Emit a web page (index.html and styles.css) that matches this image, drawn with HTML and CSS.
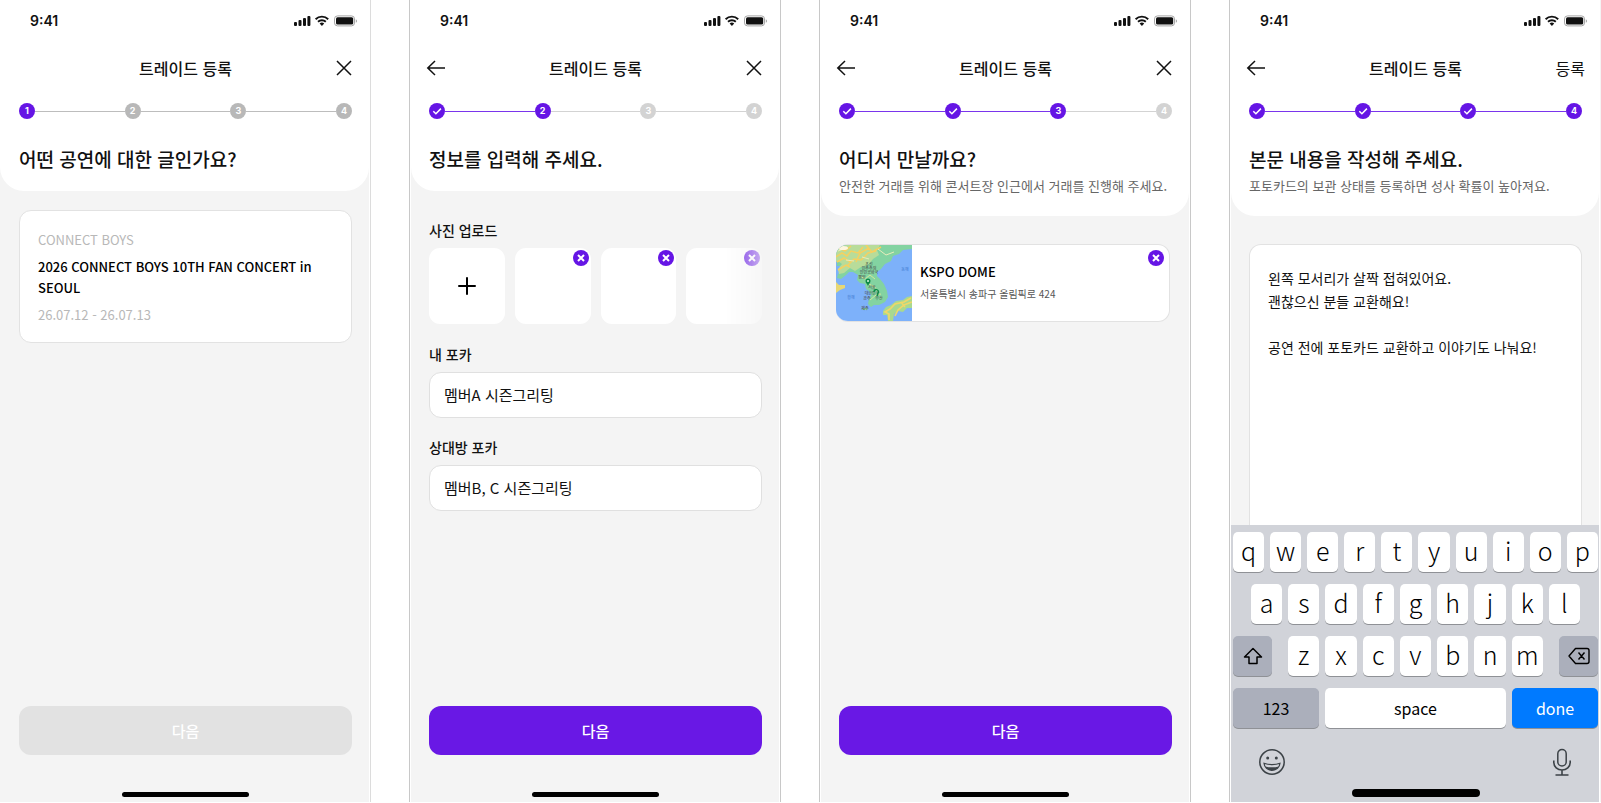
FILE: index.html
```html
<!DOCTYPE html>
<html lang="ko">
<head>
<meta charset="utf-8">
<meta name="viewport" content="width=device-width, initial-scale=1">
<title>트레이드 등록</title>
<link rel="stylesheet" href="styles.css">
</head>
<body>
<svg class="defs" aria-hidden="true">
  <symbol id="i-status" viewBox="0 0 64 12">
    <rect x="0" y="7" width="3" height="4" rx="1"/>
    <rect x="4.500" y="5" width="3" height="6" rx="1"/>
    <rect x="9" y="3" width="3" height="8" rx="1"/>
    <rect x="13.400" y="1" width="3" height="10" rx="1"/>
    <path d="M21.600 4.200a9 9 0 0 1 12.600 0M24 6.800a5.600 5.600 0 0 1 7.800 0" fill="none" stroke="currentColor" stroke-width="1.900"/>
    <path d="M27.900 11l-2.300-2.400a3.300 3.300 0 0 1 4.600 0z"/>
    <rect x="40.500" y="0.900" width="20" height="10" rx="3" fill="none" stroke="#a5a5a5" stroke-width="1"/>
    <rect x="42" y="2.300" width="17.200" height="7.200" rx="1.500"/>
    <path d="M61.800 4.200v3.500c.8-.3 1.200-1 1.200-1.750s-.4-1.400-1.200-1.750z" fill="#a5a5a5"/>
  </symbol>
  <symbol id="i-back" viewBox="0 0 20 20">
    <path d="M9 3L1.800 10 9 17M2 10h17" fill="none" stroke="currentColor" stroke-width="1.500"/>
  </symbol>
  <symbol id="i-close" viewBox="0 0 20 20">
    <path d="M3 3l14 14M17 3L3 17" fill="none" stroke="currentColor" stroke-width="1.500"/>
  </symbol>
  <symbol id="i-check" viewBox="0 0 16 16">
    <path d="M4.300 8.200l2.600 2.500 5-5.100" fill="none" stroke="currentColor" stroke-width="1.500"/>
  </symbol>
  <symbol id="i-remove" viewBox="0 0 16 16">
    <path d="M5 5l6 6M11 5l-6 6" fill="none" stroke="currentColor" stroke-width="2"/>
  </symbol>
</svg>

<main class="board">
  <section class="screen screen-first">
    <header class="top">
      <div class="status"><span>9:41</span><svg class="status-icons" aria-hidden="true"><use href="#i-status"/></svg></div>
      <nav class="nav">
        <span></span>
        <h1>트레이드 등록</h1>
        <button class="icon-btn" aria-label="닫기"><svg><use href="#i-close"/></svg></button>
      </nav>
      <ol class="steps steps-dark">
        <li class="on"><span>1</span></li>
        <li><span>2</span></li>
        <li><span>3</span></li>
        <li><span>4</span></li>
      </ol>
      <h2>어떤 공연에 대한 글인가요?</h2>
    </header>
    <div class="content">
      <article class="concert">
        <p class="muted">CONNECT BOYS</p>
        <h3>2026 CONNECT BOYS 10TH FAN CONCERT in SEOUL</h3>
        <p class="muted">26.07.12 - 26.07.13</p>
      </article>
    </div>
    <footer class="bottom">
      <button class="next" disabled>다음</button>
      <div class="home"></div>
    </footer>
  </section>

  <section class="screen">
    <header class="top">
      <div class="status"><span>9:41</span><svg class="status-icons" aria-hidden="true"><use href="#i-status"/></svg></div>
      <nav class="nav">
        <button class="icon-btn" aria-label="뒤로"><svg><use href="#i-back"/></svg></button>
        <h1>트레이드 등록</h1>
        <button class="icon-btn" aria-label="닫기"><svg><use href="#i-close"/></svg></button>
      </nav>
      <ol class="steps">
        <li class="on done"><span><svg><use href="#i-check"/></svg></span></li>
        <li class="on"><span>2</span></li>
        <li><span>3</span></li>
        <li><span>4</span></li>
      </ol>
      <h2>정보를 입력해 주세요.</h2>
    </header>
    <form class="content form">
      <h3 class="label">사진 업로드</h3>
      <div class="photos">
        <button type="button" class="photo" aria-label="사진 추가"><svg class="plus" viewBox="0 0 18 18"><path d="M9 1v16M1 9h16" stroke="currentColor" stroke-width="2" stroke-linecap="round"/></svg></button>
        <div class="photo"><button type="button" class="remove" aria-label="사진 삭제"><svg><use href="#i-remove"/></svg></button></div>
        <div class="photo"><button type="button" class="remove" aria-label="사진 삭제"><svg><use href="#i-remove"/></svg></button></div>
        <div class="photo"><button type="button" class="remove" aria-label="사진 삭제"><svg><use href="#i-remove"/></svg></button></div>
      </div>
      <label class="label" for="mine">내 포카</label>
      <input class="field" id="mine" type="text" value="멤버A 시즌그리팅">
      <label class="label" for="theirs">상대방 포카</label>
      <input class="field" id="theirs" type="text" value="멤버B, C 시즌그리팅">
    </form>
    <footer class="bottom">
      <button class="next">다음</button>
      <div class="home"></div>
    </footer>
  </section>

  <section class="screen">
    <header class="top">
      <div class="status"><span>9:41</span><svg class="status-icons" aria-hidden="true"><use href="#i-status"/></svg></div>
      <nav class="nav">
        <button class="icon-btn" aria-label="뒤로"><svg><use href="#i-back"/></svg></button>
        <h1>트레이드 등록</h1>
        <button class="icon-btn" aria-label="닫기"><svg><use href="#i-close"/></svg></button>
      </nav>
      <ol class="steps">
        <li class="on done"><span><svg><use href="#i-check"/></svg></span></li>
        <li class="on done"><span><svg><use href="#i-check"/></svg></span></li>
        <li class="on"><span>3</span></li>
        <li><span>4</span></li>
      </ol>
      <h2>어디서 만날까요?</h2>
      <p class="hint">안전한 거래를 위해 콘서트장 인근에서 거래를 진행해 주세요.</p>
    </header>
    <div class="content place-area">
      <article class="place">
        <svg class="map" viewBox="0 0 76 76" role="img" aria-label="지도">
          <rect width="76" height="76" fill="#7db1fa"/>
          <path d="M0 0h76v4l-9 1-4 4-6 2-2 5-6 3-4 5-4 3 0 4 3 3 4 5 3 7 1 6-3 5-6 3-5 0-3 2-3-3 1-5 2-4-2-4-3-2-1-5-5-1-3-3 1-5-5-3-4 0-3 3-5 4-4-1 1-4 4-4-1-4-4 0z" fill="#83d3a1"/>
          <path d="M0 0h44l-3 5 2 5-6 4-5 6-7 2-6 4-5-3-6 5-5 1-1-5 4-5-4-3-2 1z" fill="#b8dc9a"/>
          <path d="M0 12l6-4 5 3 4-5 7 2 5-6M12 20l6-6 7 1 7-7 8-2M3 3l6 3 6-5M20 17l4-9 9-5M30 0l6 7 9-5M1 17l7-4 6 4M2 25l8-5 4 2" fill="none" stroke="#f5d060" stroke-width="1.500"/>
          <path d="M2 6l8-3M26 12l7 2M10 15l8 1M42 4l8 6 8-3" fill="none" stroke="#e8ecbb" stroke-width="1"/>
          <ellipse cx="7" cy="3" rx="5" ry="2" fill="#fdf6df"/>
          <path d="M24 31l5 3 5-4 5 4M33 39l6 3 4 7M34 55l6-5 5-1" fill="none" stroke="#d5e79a" stroke-width="1"/>
          <path d="M0 37l3 3 6 0 0 3-5 2-4 3z" fill="#e7d774"/>
          <path d="M76 51l-5 1-4 3-7 1-5 4-5 2-3 4 0 4 4 0 1 6h5l1-7 4-3 5 1 4-4h5z" fill="#a9d98f"/>
          <path d="M75 53l-7 4-9 2-5 5-5 3 4 2 0 6M76 57l-8 3-6 5-3 6M65 57l4 5" fill="none" stroke="#f0d768" stroke-width="1.600"/>
          <ellipse cx="29" cy="64" rx="3" ry="1" fill="#83d3a1"/>
          <g class="map-text">
            <text x="33" y="21">조선</text>
            <text x="33" y="25">민주주의</text>
            <text x="33" y="29">인민공화국</text>
            <text x="26" y="34">평양</text>
            <text x="36" y="44">서울</text>
            <text x="36" y="50">대한민국</text>
            <text x="31" y="55">광주</text>
            <text x="43" y="55">부산</text>
            <text x="29" y="65">제주</text>
            <text class="sea" x="69" y="26">동해</text>
            <text class="sea" x="15" y="54">황해</text>
          </g>
          <path d="M32 41c-.500-2-2.500-2.800-2.500-5a2.500 2.500 0 0 1 5 0c0 2.200-2 3-2.500 5z" fill="#0d8a4a"/>
          <circle cx="32" cy="36" r="1" fill="#d8f3df"/>
          <path d="M38 47a2.200 2.200 0 1 1 4 1l-1 3" fill="none" stroke="#0d8a4a" stroke-width="1.500"/>
        </svg>
        <div class="place-text">
          <h3>KSPO DOME</h3>
          <p>서울특별시 송파구 올림픽로 424</p>
        </div>
        <button class="remove" aria-label="장소 삭제"><svg><use href="#i-remove"/></svg></button>
      </article>
    </div>
    <footer class="bottom">
      <button class="next">다음</button>
      <div class="home"></div>
    </footer>
  </section>

  <section class="screen screen-last">
    <header class="top">
      <div class="status"><span>9:41</span><svg class="status-icons" aria-hidden="true"><use href="#i-status"/></svg></div>
      <nav class="nav">
        <button class="icon-btn" aria-label="뒤로"><svg><use href="#i-back"/></svg></button>
        <h1>트레이드 등록</h1>
        <button class="submit">등록</button>
      </nav>
      <ol class="steps">
        <li class="on done"><span><svg><use href="#i-check"/></svg></span></li>
        <li class="on done"><span><svg><use href="#i-check"/></svg></span></li>
        <li class="on done"><span><svg><use href="#i-check"/></svg></span></li>
        <li class="on"><span>4</span></li>
      </ol>
      <h2>본문 내용을 작성해 주세요.</h2>
      <p class="hint">포토카드의 보관 상태를 등록하면 성사 확률이 높아져요.</p>
    </header>
    <div class="content write">
      <textarea class="body-text" aria-label="본문">왼쪽 모서리가 살짝 접혀있어요.
괜찮으신 분들 교환해요!

공연 전에 포토카드 교환하고 이야기도 나눠요!</textarea>
    </div>
    <div class="keyboard">
      <div class="keys">
        <button>q</button><button>w</button><button>e</button><button>r</button><button>t</button><button>y</button><button>u</button><button>i</button><button>o</button><button>p</button>
      </div>
      <div class="keys keys-mid">
        <button>a</button><button>s</button><button>d</button><button>f</button><button>g</button><button>h</button><button>j</button><button>k</button><button>l</button>
      </div>
      <div class="keys-low">
        <button class="gray" aria-label="shift"><svg class="key-icon" viewBox="0 0 24 24"><path d="M12 4.500l8.500 8.500h-4.500v6.500h-8v-6.500h-4.500z" fill="none" stroke="currentColor" stroke-width="1.500" stroke-linejoin="round"/></svg></button>
        <div class="keys">
          <button>z</button><button>x</button><button>c</button><button>v</button><button>b</button><button>n</button><button>m</button>
        </div>
        <button class="gray" aria-label="delete"><svg class="key-icon" viewBox="0 0 24 24"><path d="M8.500 4.500h11.500a2 2 0 0 1 2 2v11a2 2 0 0 1-2 2h-11.500l-6.500-7.500zM11.500 8.500l6 7M17.500 8.500l-6 7" fill="none" stroke="currentColor" stroke-width="1.400" stroke-linejoin="round"/></svg></button>
      </div>
      <div class="keys-space">
        <button class="gray">123</button>
        <button>space</button>
        <button class="blue">done</button>
      </div>
      <div class="tools">
        <button aria-label="emoji"><svg viewBox="0 0 28 28"><circle cx="14" cy="14" r="12.200" fill="none" stroke="currentColor" stroke-width="1.500"/><circle cx="9.700" cy="10" r="1.500"/><circle cx="18.300" cy="10" r="1.500"/><path d="M6 15.300c2.500 1 5 1.400 8 1.400s5.500-.4 8-1.400c-.3 4-3.600 7-8 7s-7.700-3-8-7z" fill="none" stroke="currentColor" stroke-width="1.200"/><path d="M7.200 18.400c4 1.300 9.600 1.300 13.600 0-1.200 2.400-3.600 3.900-6.800 3.900s-5.600-1.500-6.800-3.900z"/></svg></button>
        <button aria-label="dictation"><svg viewBox="0 0 28 28"><rect x="9.800" y="1.500" width="8.400" height="16.500" rx="4.200" fill="none" stroke="currentColor" stroke-width="1.500"/><path d="M5.800 12.500v2a8.200 7.500 0 0 0 16.400 0v-2M14 22v4.500M7.500 27h13" fill="none" stroke="currentColor" stroke-width="1.600"/></svg></button>
      </div>
      <div class="home home-thick"></div>
    </div>
  </section>
</main>
</body>
</html>
```
FILE: styles.css
```css
* { box-sizing: border-box; }

body {
  margin: 0;
  background: #fff;
  color: #111;
  font-family: "Noto Sans CJK KR", "Noto Sans", sans-serif;
}

h1, h2, h3, p, ol { margin: 0; padding: 0; }

button {
  margin: 0;
  padding: 0;
  border: 0;
  background: none;
  color: inherit;
  font: inherit;
}

svg { display: block; fill: currentColor; }

.defs { position: absolute; width: 0; height: 0; }

.board {
  display: grid;
  grid-template-columns: 371fr 372fr 372fr 372fr;
  column-gap: 38px;
  min-height: 100vh;
  padding-bottom: 1px;
}

.screen {
  display: flex;
  flex-direction: column;
  min-width: 0;
  padding: 0 1px;
  border: solid #c8c8c8;
  border-width: 0 1px;
  background: #f4f4f4 content-box;
}
.screen-first { border-left: 0; border-color: #dcdcdc; padding-left: 0; }
.screen-last { border-right-color: #f4f4f4; }

/* Header */
.top {
  padding: 0 17px 16px 18px;
  border-radius: 0 0 24px 24px;
  background: #fff;
}
.screen-first .top, .screen-first .content, .screen-first .bottom { padding-left: 19px; }

.status {
  display: flex;
  align-items: center;
  justify-content: space-between;
  height: 42px;
  padding-left: 11px;
  font: 600 14px/20px Inter, sans-serif;
}
.status-icons { width: 64px; height: 12px; margin-right: -6px; }

.nav {
  display: grid;
  grid-template-columns: 40px 1fr 40px;
  align-items: center;
  height: 52px;
}
.nav h1 { font-size: 16px; line-height: 24px; font-weight: 500; text-align: center; }
.icon-btn { width: 20px; }
.icon-btn svg { width: 20px; height: 20px; }
.icon-btn:first-child { margin-left: -3px; }
.icon-btn:last-child { justify-self: end; margin-right: -2px; }
.submit { justify-self: end; margin-right: -3px; font-size: 16px; line-height: 24px; }

.steps { display: flex; height: 16px; margin: 9px 0 24px; list-style: none; }
.steps li { display: flex; align-items: center; color: #d3d3d3; }
.steps li:not(:last-child) { flex: 1; }
.steps li:not(:last-child)::after { content: ""; flex: 1; height: 1px; background: #d3d3d3; }
.steps span {
  display: grid;
  place-items: center;
  width: 16px;
  height: 16px;
  border-radius: 50%;
  background: currentColor;
  font: 700 9px/16px Inter, sans-serif;
  -webkit-text-fill-color: #fff;
}
.steps span svg { width: 16px; height: 16px; color: #fff; }
.steps.steps-dark li { color: #b8b8b8; }
.steps.steps-dark li:not(:last-child)::after { background: #bdbdbd; }
.steps li.on, .steps.steps-dark li.on { color: #6515e5; }
.steps li.done:not(:last-child)::after { background: #7a35ec; }

.top h2 { font-size: 19px; line-height: 32px; font-weight: 500; }
.hint { padding-bottom: 3px; color: #666; font-size: 13px; line-height: 22px; }

/* Content */
.content { flex: 1; padding: 19px 17px 0 18px; }

.concert {
  padding: 18px 18px 17px;
  border: 1px solid #e2e2e2;
  border-radius: 12px;
  background: #fff;
  font-size: 13px;
  line-height: 21px;
}
.concert h3 { margin: 6px 0; color: #000; font-size: 13px; font-weight: 500; }
.muted { color: #b8b8b8; }

.form { display: flex; flex-direction: column; padding-top: 29px; }
.label { margin-bottom: 8px; font-size: 14px; line-height: 20px; font-weight: 500; }

.photos {
  display: grid;
  grid-template-columns: repeat(4, 1fr);
  gap: 10px;
  margin-bottom: 20px;
  -webkit-mask-image: linear-gradient(to right, #000 88%, rgba(0, 0, 0, .3));
  mask-image: linear-gradient(to right, #000 88%, rgba(0, 0, 0, .3));
}
.photo {
  display: flex;
  justify-content: flex-end;
  aspect-ratio: 1;
  padding: 2px;
  border-radius: 11px;
  background: #fff;
}
button.photo { align-items: center; justify-content: center; color: #000; }
.plus { width: 18px; height: 18px; }
.remove {
  width: 16px;
  height: 16px;
  border-radius: 50%;
  background: #6515e5;
  color: #fff;
}
.remove svg { width: 16px; height: 16px; }

.field {
  width: 100%;
  height: 46px;
  margin-bottom: 19px;
  padding: 0 14px;
  border: 1px solid #e0e0e0;
  border-radius: 12px;
  background: #fff;
  color: #111;
  font: 15px/22px "Noto Sans CJK KR", sans-serif;
}

.place-area { padding: 28px 19px 0 15px; }
.place {
  display: flex;
  overflow: hidden;
  border: 1px solid #e2e2e2;
  border-left: 0;
  border-radius: 12px;
  background: #fff;
}
.map { width: 76px; height: 76px; }
.map-text { fill: #444; font-size: 4px; text-anchor: middle; }
.map-text .sea { fill: #3f78d0; }
.place-text { flex: 1; padding: 17px 0 0 8px; }
.place-text h3 { color: #000; font-size: 13px; line-height: 20px; font-weight: 500; }
.place-text p { margin-top: 3px; color: #555; font-size: 10px; line-height: 18px; }
.place .remove { margin: 5px 5px 0 0; }

.write { display: flex; padding-top: 28px; }
.body-text {
  flex: 1;
  min-width: 0;
  padding: 22px 18px;
  border: 1px solid #e2e2e2;
  border-bottom: 0;
  border-radius: 12px 12px 0 0;
  background: #fff;
  color: #111;
  font: 14px/23px "Noto Sans CJK KR", sans-serif;
  resize: none;
}

/* Footer */
.bottom { padding: 0 17px 5px 18px; }
.next {
  display: block;
  width: 100%;
  height: 49px;
  border-radius: 12px;
  background: #6918e5;
  color: #fff;
  font-size: 15px;
  font-weight: 500;
}
.next:disabled { background: #e2e2e2; }
.home { width: 127px; height: 5px; margin: 37px auto 0; border-radius: 3px; background: #000; }

/* Keyboard */
.keyboard {
  display: flex;
  flex-direction: column;
  gap: 12px;
  padding: 7px 1px 5px 2px;
  background: #d1d3d9;
  color: #000;
}
.keys { display: flex; gap: 6px; }
.keys-mid { padding: 0 18px; }
.keys-low { display: grid; grid-template-columns: 39px 1fr 39px; gap: 16px; }
.keys-space { display: grid; grid-template-columns: 86px 1fr 86px; gap: 6px; }
.keys button { flex: 1; min-width: 0; font-size: 25px; line-height: 36px; font-weight: 300; padding-bottom: 4px; }
.keys button, .keys-low > button, .keys-space button {
  height: 40px;
  border-radius: 5px;
  background: #fff;
  box-shadow: 0 1px 0 #8f9196;
}
.keys-low > .gray, .keys-space .gray { background: #abafbb; }
.keys-space .blue { background: #007aff; color: #fff; }
.keys-space button { font-size: 16px; }
.key-icon { width: 24px; height: 24px; margin: 0 auto; }
.tools { display: flex; justify-content: space-between; padding: 8px 22px 0 25px; color: #3c4247; }
.tools svg { width: 28px; height: 28px; }
.home-thick { width: 128px; height: 8px; margin-top: 1px; border-radius: 4px; }
```
